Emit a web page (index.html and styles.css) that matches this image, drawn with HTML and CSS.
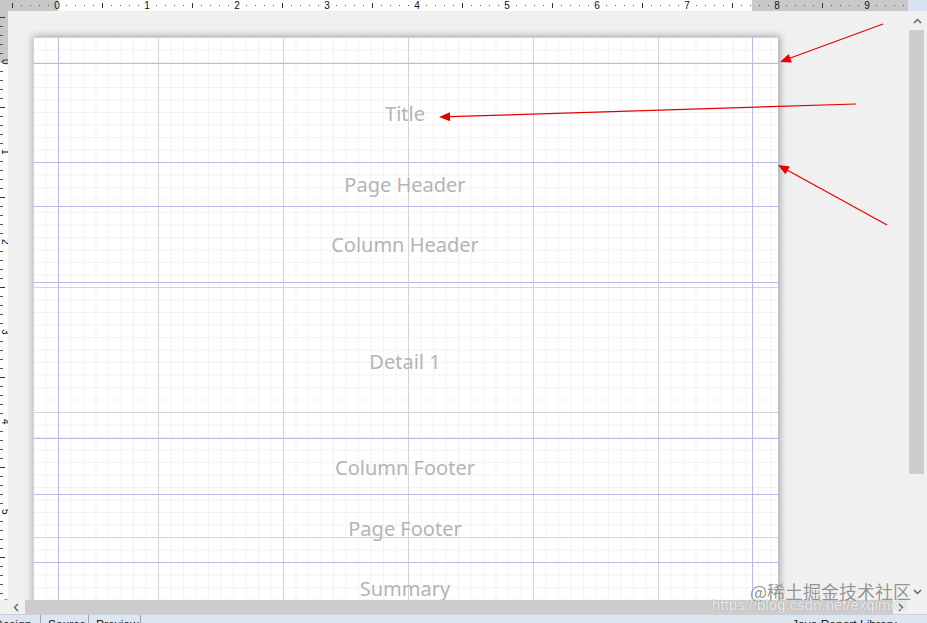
FILE: index.html
```html
<!DOCTYPE html>
<html>
<head>
<meta charset="utf-8">
<title>Report Designer</title>
<link rel="stylesheet" href="styles.css">
</head>
<body>
<div class="app">
  <div class="corner"></div>
  <div class="ruler-top">
    <span class="rt-lead"></span>
    <span class="rt-cell">0</span>
    <span class="rt-cell">1</span>
    <span class="rt-cell">2</span>
    <span class="rt-cell">3</span>
    <span class="rt-cell">4</span>
    <span class="rt-cell">5</span>
    <span class="rt-cell">6</span>
    <span class="rt-cell">7</span>
    <span class="rt-cell">8</span>
    <span class="rt-cell">9</span>
  </div>
  <div class="vs-top"></div>

  <div class="ruler-left">
    <span class="rl-lead"></span>
    <span class="rl-cell">0</span>
    <span class="rl-cell">1</span>
    <span class="rl-cell">2</span>
    <span class="rl-cell">3</span>
    <span class="rl-cell">4</span>
    <span class="rl-cell">5</span>
    <span class="rl-cell">6</span>
  </div>

  <div class="canvas">
    <div class="page">
      <div class="band band-top"></div>
      <div class="band band-title"><span>Title</span></div>
      <div class="band band-pheader"><span>Page Header</span></div>
      <div class="band band-cheader"><span>Column Header</span></div>
      <div class="band band-detail"><span>Detail 1</span></div>
      <div class="band band-cfooter"><span>Column Footer</span></div>
      <div class="band band-pfooter"><span>Page Footer</span></div>
      <div class="band band-summary"><span>Summary</span></div>
    </div>
  </div>

  <div class="vscroll">
    <div class="vs-btn vs-up">
      <svg width="9" height="6" viewBox="0 0 9 6"><path d="M1 5 L4.5 1.5 L8 5" fill="none" stroke="#606060" stroke-width="1.4"/></svg>
    </div>
    <div class="vs-thumb"></div>
    <div class="vs-space"></div>
    <div class="vs-btn vs-down">
      <svg width="9" height="6" viewBox="0 0 9 6"><path d="M1 1 L4.5 4.5 L8 1" fill="none" stroke="#606060" stroke-width="1.4"/></svg>
    </div>
  </div>

  <div class="hscroll">
    <div class="hs-btn hs-left">
      <svg width="6" height="9" viewBox="0 0 6 9"><path d="M5 1 L1.5 4.5 L5 8" fill="none" stroke="#606060" stroke-width="1.4"/></svg>
    </div>
    <div class="hs-thumb"></div>
    <div class="hs-btn hs-right">
      <svg width="6" height="9" viewBox="0 0 6 9"><path d="M1 1 L4.5 4.5 L1 8" fill="none" stroke="#606060" stroke-width="1.4"/></svg>
    </div>
  </div>
  <div class="sb-corner"></div>

  <div class="tabs">
    <span class="tab">Design</span>
    <span class="tab">Source</span>
    <span class="tab">Preview</span>
    <span class="tab-fill"></span>
    <span class="tab-status">Java Report Library</span>
  </div>
</div>

<svg class="annot" width="927" height="623" viewBox="0 0 927 623">
  <g stroke="#e60000" stroke-width="1.2" fill="none">
    <line x1="883" y1="24" x2="789" y2="58.5"/>
    <line x1="856" y1="104" x2="449" y2="116.7"/>
    <line x1="887" y1="225" x2="787" y2="170"/>
  </g>
  <g fill="#e60000">
    <polygon points="780,62 791.9,62.4 788.7,54"/>
    <polygon points="439,117 450.1,121.2 449.9,112.2"/>
    <polygon points="778,165 785.4,174.2 789.8,166.4"/>
  </g>
</svg>

<div class="wm wm-juejin">@稀土掘金技术社区</div>
<div class="wm wm-csdn">https://blog.csdn.net/exqimd3</div>
</body>
</html>
```

FILE: styles.css
```css
* { box-sizing: border-box; }

html, body {
  margin: 0;
  padding: 0;
}

body {
  width: 927px;
  height: 623px;
  overflow: hidden;
  position: relative;
  background: #f0f0f0;
  font-family: "Noto Sans", "Liberation Sans", sans-serif;
}

.app {
  display: grid;
  grid-template-columns: 8px 900px 19px;
  grid-template-rows: 11px 589px 14px 9px;
  width: 927px;
  height: 623px;
}

.corner { background: #c8c8c8; }

/* ---------- top ruler ---------- */
.ruler-top {
  display: flex;
  align-items: center;
  overflow: hidden;
  background:
    linear-gradient(to right, transparent 45px, #333 45px 46px, transparent 46px) 49px 3px / 90px 5px repeat-x,
    linear-gradient(to right,
      transparent 9px, #555 9px 10px, transparent 10px 18px, #555 18px 19px,
      transparent 19px 27px, #555 27px 28px, transparent 28px 36px, #555 36px 37px,
      transparent 37px 54px, #555 54px 55px, transparent 55px 63px, #555 63px 64px,
      transparent 64px 72px, #555 72px 73px, transparent 73px 81px, #555 81px 82px,
      transparent 82px) 49px 5px / 90px 1px repeat-x,
    linear-gradient(to right, #c8c8c8 0 50px, #fdfdfd 50px 744px, #c8c8c8 744px);
}

.rt-lead { flex: none; width: 4px; }

.rt-cell {
  flex: none;
  width: 90px;
  text-align: center;
  font: 10px/11px "Liberation Sans", Arial, sans-serif;
  color: #111;
}

.vs-top { background: #d9e3ef; }

/* ---------- left ruler ---------- */
.ruler-left {
  display: flex;
  flex-direction: column;
  overflow: hidden;
  background:
    linear-gradient(to bottom, transparent 45px, #333 45px 46px, transparent 46px) 0 51px / 5px 90px repeat-y,
    linear-gradient(to bottom,
      transparent 9px, #555 9px 10px, transparent 10px 18px, #555 18px 19px,
      transparent 19px 27px, #555 27px 28px, transparent 28px 36px, #555 36px 37px,
      transparent 37px 54px, #555 54px 55px, transparent 55px 63px, #555 63px 64px,
      transparent 64px 72px, #555 72px 73px, transparent 73px 81px, #555 81px 82px,
      transparent 82px) 0 51px / 3px 90px repeat-y,
    linear-gradient(to bottom, #c8c8c8 0 52px, #fdfdfd 52px);
}

.rl-lead { flex: none; height: 6px; }

.rl-cell {
  flex: none;
  height: 90px;
  display: flex;
  align-items: center;
  justify-content: center;
  writing-mode: vertical-rl;
  font: 10px/8px "Liberation Sans", Arial, sans-serif;
  color: #111;
  padding-left: 2px;
}

/* ---------- canvas & page ---------- */
.canvas {
  overflow: hidden;
  background: #f0f0f0;
  padding: 26px 0 0 25px;
}

.page {
  width: 745px;
  display: flex;
  flex-direction: column;
  background-color: #fff;
  background-image:
    linear-gradient(to right, transparent 25px, #b9b9e6 25px 26px, transparent 26px 719px, #b9b9e6 719px 720px, transparent 720px),
    linear-gradient(to right, #d3d3d9 0 1px, transparent 1px),
    linear-gradient(to bottom, #d3d3d9 0 1px, transparent 1px),
    linear-gradient(to right, #f3f3f5 0 1px, transparent 1px),
    linear-gradient(to bottom, #f3f3f5 0 1px, transparent 1px);
  background-size: 100% 100%, 125px 125px, 125px 125px, 12.5px 12.5px, 12.5px 12.5px;
  box-shadow: 1px 0 7px 1px rgba(0, 0, 0, 0.32);
}

.band {
  flex: none;
  display: flex;
  align-items: center;
  justify-content: center;
  padding: 0 26px 0 25px;
  border-bottom: 1px solid #b9b9e6;
  font-size: 20px;
  line-height: 24px;
  color: #b4b4b4;
  white-space: nowrap;
}

.band-top { height: 27px; }
.band-title { height: 99px; padding-top: 2px; }
.band-pheader { height: 44px; }
.band-cheader { height: 76px; }
.band-detail { height: 156px; padding-top: 2px; }
.band-cfooter { height: 56px; padding-top: 2px; }
.band-pfooter { height: 68px; }
.band-summary { height: 54px; padding-bottom: 2px; }

/* ---------- scrollbars ---------- */
.vscroll {
  display: flex;
  flex-direction: column;
  background: #f0f0f0;
}

.vs-btn {
  flex: none;
  display: flex;
  align-items: center;
  justify-content: center;
}

.vs-up { height: 19px; }
.vs-down { height: 17px; }

.vs-thumb {
  flex: none;
  height: 444px;
  width: 15px;
  margin-left: 1px;
  background: #cdcdcd;
}

.vs-space { flex: 1; }

.hscroll {
  grid-column: 1 / 3;
  display: flex;
  background: #f0f0f0;
}

.hs-btn {
  flex: none;
  display: flex;
  align-items: center;
  justify-content: center;
}

.hs-left { width: 25px; padding-left: 6px; }
.hs-right { width: 15px; }

.hs-thumb {
  flex: 1;
  background: #cdcdcd;
}

.sb-corner { background: #f0f0f0; }

/* ---------- bottom tabs ---------- */
.tabs {
  grid-column: 1 / 4;
  display: flex;
  overflow: hidden;
  background: #dde5ef;
  border-top: 1px solid #c9d1dc;
  font: 12px/12px "Liberation Sans", Arial, sans-serif;
  color: #222;
}

.tab {
  flex: none;
  padding: 4px 0 0 7px;
  border-right: 1px solid #9aa3ae;
  white-space: nowrap;
  overflow: hidden;
}

.tab:nth-child(1) { width: 41px; padding-left: 0; text-indent: -6px; }
.tab:nth-child(2) { width: 48px; }
.tab:nth-child(3) { width: 52px; }

.tab-fill { flex: 1; }

.tab-status {
  flex: none;
  width: 135px;
  padding-top: 4px;
  white-space: nowrap;
}

/* ---------- overlays ---------- */
.annot {
  position: absolute;
  left: 0;
  top: 0;
  pointer-events: none;
}

.wm {
  position: absolute;
  white-space: nowrap;
  pointer-events: none;
}

.wm-juejin {
  left: 750px;
  top: 580px;
  font: 18px/22px "Noto Sans CJK SC", "Noto Sans", sans-serif;
  color: rgba(120, 120, 120, 0.8);
  text-shadow: 0 0 1px rgba(255, 255, 255, 0.9);
}

.wm-csdn {
  left: 712px;
  top: 596px;
  font: 15px/17px "Liberation Sans", Arial, sans-serif;
  color: rgba(255, 255, 255, 0.85);
  text-shadow: 0 0 1px rgba(0, 0, 0, 0.35);
}
```
